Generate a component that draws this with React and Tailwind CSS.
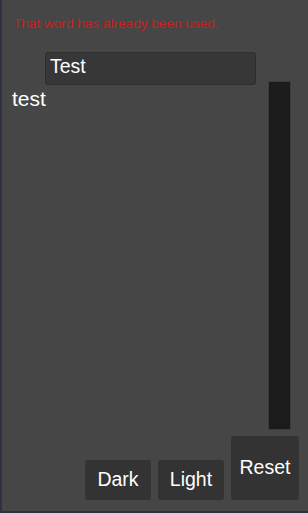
export default function App() {
  return (
    <div
      className="w-[308px] h-[513px] bg-[#464646] border-l-2 border-b-2 border-[#2d3140] flex flex-col text-white overflow-hidden"
      style={{ fontFamily: '"Liberation Sans", Arial, sans-serif' }}
    >
      <p className="pt-[17px] pl-[11px] text-[13.6px] leading-[14px] text-[#c8201e]">
        That word has already been used.
      </p>

      <div className="flex mt-[21px]">
        <div className="w-[256px] flex flex-col">
          <div className="ml-[43px] w-[211px] h-[33px] bg-[#373737] border border-[#2e2e2e] rounded-[3px] px-[4px] pt-[1px] text-[19.5px] leading-[24px]">
            Test
          </div>
          <div className="pl-[10px] mt-[2px] text-[21px] leading-[24px]">test</div>
        </div>
        <div className="ml-[10px] mt-[29px] w-[23px] h-[349px] bg-[#1b1b1b] border border-[#3c3c3c]" />
      </div>

      <div className="flex-1 flex justify-end items-end gap-[7px] pr-[9px] pb-[11px]">
        <button className="w-[66px] h-[40px] bg-[#333333] rounded-[3px] text-[19.5px] flex items-center justify-center">
          Dark
        </button>
        <button className="w-[66px] h-[40px] bg-[#333333] rounded-[3px] text-[19.5px] flex items-center justify-center">
          Light
        </button>
        <button className="w-[68px] h-[64px] bg-[#333333] rounded-[3px] text-[19.5px] flex items-center justify-center">
          Reset
        </button>
      </div>
    </div>
  )
}
